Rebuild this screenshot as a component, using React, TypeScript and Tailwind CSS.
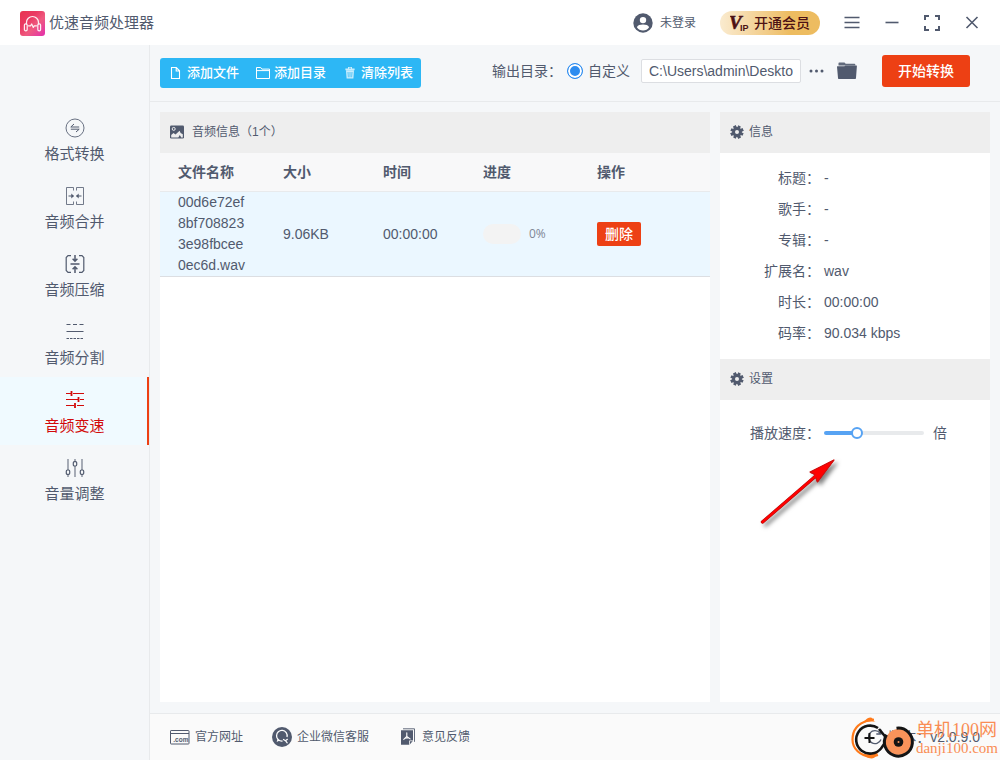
import { useState, type ReactNode } from "react";

function LogoIcon() {
  return (
    <svg viewBox="0 0 25 25" className="size-[25px] shrink-0" fill="none" aria-hidden="true">
      <defs>
        <linearGradient id="logo" x1="0" y1="0" x2="1" y2="1">
          <stop offset="0" stopColor="#e8334f" />
          <stop offset=".35" stopColor="#ea3a63" />
          <stop offset=".6" stopColor="#ef5a80" />
          <stop offset="1" stopColor="#e22fae" />
        </linearGradient>
      </defs>
      <rect width="25" height="25" rx="3" fill="url(#logo)" />
      <g stroke="#fff" strokeWidth="1.2" strokeLinecap="round" strokeLinejoin="round" opacity=".92">
        <path d="M6.5 13v-1.5a6 6 0 0 1 12 0V13" />
        <rect x="4.4" y="12.8" width="2.8" height="7" rx="1.3" />
        <rect x="17.8" y="12.8" width="2.8" height="7" rx="1.3" />
        <path d="M8.5 14.8h2l1.2-1.8 1.6 3.4 1-1.6h2.2" />
      </g>
    </svg>
  );
}

function UserIcon() {
  return (
    <svg viewBox="0 0 20 20" className="size-5" aria-hidden="true">
      <circle cx="10" cy="10" r="9.7" fill="#515a6e" />
      <circle cx="10" cy="7.1" r="3.2" fill="#fff" />
      <path d="M3.9 14.2c.5-2 3.4-2.7 6.1-2.7s5.600.7 6.100 2.700A7.400 7.400 0 0 1 10 17.400a7.400 7.400 0 0 1-6.100-3.200z" fill="#fff" />
    </svg>
  );
}

function StrokeIcon({ d, className = "size-4", width = 1.6 }: { d: string; className?: string; width?: number }) {
  return (
    <svg viewBox="0 0 16 16" className={className} fill="none" stroke="currentColor" strokeWidth={width} aria-hidden="true">
      <path d={d} />
    </svg>
  );
}

function ConvertIcon() {
  return (
    <svg viewBox="0 0 20 20" className="size-5" fill="none" stroke="currentColor" strokeWidth="1" aria-hidden="true">
      <circle cx="10" cy="10" r="9" opacity=".85" />
      <path d="M9 6 5.800 9h8.400M5.800 11.200h8.400L11 14" />
    </svg>
  );
}

function MergeIcon() {
  return (
    <svg viewBox="0 0 20 20" className="size-5" fill="none" stroke="currentColor" strokeWidth="1" aria-hidden="true">
      <path d="M8.500 4.500v-3h-7v17h7v-3M11.500 4.500v-3h7v17h-7v-3" opacity=".8" />
      <path d="M3.500 10h5M11.500 10h5" strokeWidth="1.200" />
      <path d="m6.300 7.500 2.700 2.500-2.700 2.500zM13.700 7.500 11 10l2.700 2.500z" fill="currentColor" stroke="none" />
    </svg>
  );
}

function CompressIcon() {
  return (
    <svg viewBox="0 0 20 20" className="size-5" fill="none" stroke="currentColor" strokeWidth="1.500" aria-hidden="true">
      <path d="M6 1.700H3L1.200 3.500v13L3 18.300h3M14 1.700h3l1.800 1.800v13L17 18.300h-3" strokeWidth="1.200" />
      <path d="M5.500 10h9M10 1v6M7.600 4.800 10 7.200l2.400-2.400M10 19v-6M7.600 15.200 10 12.800l2.400 2.400" />
    </svg>
  );
}

function SplitIcon() {
  return (
    <svg viewBox="0 0 20 20" className="size-5" fill="none" stroke="currentColor" strokeWidth="1.200" aria-hidden="true">
      <path d="M1.500 2.500h4M8 2.500h4M14.500 2.500h4M1.500 9.500h17" />
      <path d="M1.500 16.500h17" strokeDasharray="2.500 1" />
    </svg>
  );
}

function SpeedIcon() {
  return (
    <svg viewBox="0 0 20 20" className="size-5" fill="none" stroke="currentColor" strokeWidth="1.100" aria-hidden="true">
      <path d="M1 3.500h5M8 3.500h11M1 9.500h12M15 9.500h4M1 15.500h8M12 15.500h7" />
      <path d="M6.500 1v5M13.500 7v5M10 13v5" strokeWidth="1.800" />
    </svg>
  );
}

function VolumeIcon() {
  return (
    <svg viewBox="0 0 20 20" className="size-5" fill="none" stroke="currentColor" strokeWidth="1.200" aria-hidden="true">
      <path d="M3 1v11M3 16.500V19M10 1v2.500M10 8v11M17 1v11M17 16.500V19" opacity=".8" />
      <rect x="1.300" y="12" width="3.400" height="4.400" rx="1.200" />
      <rect x="8.300" y="3.600" width="3.400" height="4.400" rx="1.200" />
      <rect x="15.300" y="12" width="3.400" height="4.400" rx="1.200" />
    </svg>
  );
}

function FileIcon() {
  return <StrokeIcon width={1.1} d="M3.500 2.500h4.800l3.200 3.300v7.700h-8zM8.200 2.500V6h3.300" />;
}

function FolderOutlineIcon() {
  return <StrokeIcon width={1} d="M1.500 13.500v-11h4.200l1.100 1.600h7.700v9.400zM1.500 5.600h13" />;
}

function TrashIcon() {
  return (
    <svg viewBox="0 0 16 16" className="size-4" fill="currentColor" opacity=".75" aria-hidden="true">
      <path fillRule="evenodd" d="M6 2h4v1.600h2.600v1.600H3.400V3.600H6zm1 .8v.8h2v-.8z" />
      <path fillRule="evenodd" d="M4 5.200h8l-.6 8.300H4.600zm1.600 1.900.3 5.200h.7l-.2-5.200zm2 0v5.200h.8V7.100zm2 0-.2 5.200h.7l.3-5.200z" />
    </svg>
  );
}

function FolderIcon() {
  return (
    <svg viewBox="0 0 20 18" className="h-[18px] w-5" fill="#515a6e" aria-hidden="true">
      <path d="M1.500 1.200c0-.5.300-.7.700-.7h5.300l1.200 1.300h8.800c.5 0 .8.300.8.800v1H1.500z" opacity=".9" />
      <path d="M.4 4.200h7l1-.8h11.100c.3 0 .5.200.4.500l-.9 12c0 .7-.5 1-1 1H2c-.6 0-1-.3-1-1L0 4.700c0-.3.100-.5.400-.5z" />
    </svg>
  );
}

function PictureIcon() {
  return (
    <svg viewBox="0 0 14 14" className="size-[14px]" aria-hidden="true">
      <rect y=".5" width="14" height="13" rx="1.300" fill="#515a6e" />
      <circle cx="3.700" cy="3.900" r="1.500" fill="none" stroke="#eee" strokeWidth="1" />
      <path d="M1.200 12.500V10l2.300-2 2 1.500L9.600 5.800l1 2.200 2.200 1.200v3.300h-1.500L9.800 10l-1.500 2.500z" fill="#eee" />
    </svg>
  );
}

function GearIcon() {
  return (
    <svg viewBox="0 0 14 14" className="size-[14px]" aria-hidden="true">
      <g fill="#515a6e">
        <circle cx="7" cy="7" r="4.900" />
        <path d="M5.600.4h2.800v13.200H5.600zM.4 5.600h13.200v2.800H.4z" transform="rotate(22.500 7 7)" />
        <path d="M5.600.4h2.800v13.200H5.600zM.4 5.600h13.200v2.800H.4z" transform="rotate(67.500 7 7)" />
        <path d="M5.600.4h2.800v13.200H5.600zM.4 5.600h13.200v2.800H.4z" transform="rotate(-22.500 7 7)" />
      </g>
      <circle cx="7" cy="7" r="2" fill="#eee" />
    </svg>
  );
}

function SiteIcon() {
  return (
    <svg viewBox="0 0 20 16" className="h-4 w-5" fill="none" stroke="#515a6e" aria-hidden="true">
      <rect x=".5" y="1.500" width="18.500" height="13.500" rx=".6" />
      <path d="M.5 4.500H19" />
      <text x="3.300" y="13" fontSize="6.500" fontWeight="700" fontFamily="Liberation Sans, sans-serif" fill="#515a6e" stroke="none">.com</text>
    </svg>
  );
}

function SupportIcon() {
  return (
    <svg viewBox="0 0 20 20" className="size-5" fill="none" aria-hidden="true">
      <circle cx="10" cy="10" r="10" fill="#515a6e" />
      <path d="M15 10A5.300 5.300 0 1 0 10.500 14" stroke="#fff" strokeWidth="1.300" />
      <path d="m5.500 12-.8 3 3-1.400" fill="#fff" />
      <path d="m11.500 12.500 2 1.200 1.900-1.400M13.500 13.700l1.700 2.200" stroke="#fff" strokeWidth="1.200" strokeLinecap="round" />
    </svg>
  );
}

function FeedbackIcon() {
  return (
    <svg viewBox="0 0 16 18" className="h-[18px] w-4" fill="none" aria-hidden="true">
      <path d="M3 .8h11.500v13" stroke="#515a6e" strokeWidth=".9" />
      <path d="M1 2.300h12v10.500l-3.500 4H1z" fill="#515a6e" />
      <path d="M9.500 16.800v-4H13" stroke="#fafafa" strokeWidth=".8" />
      <path d="M6.800 4.800v3.600M6.800 8.400 3.800 11.300M6.800 8.400l3.300 2.500M5.200 10.100l3.400-.3" stroke="#fff" strokeWidth="1.100" strokeLinecap="round" />
    </svg>
  );
}

function RefreshIcon() {
  return (
    <svg viewBox="0 0 18 18" className="size-[18px]" fill="none" stroke="#515a6e" strokeWidth="1.300" aria-hidden="true">
      <path d="M15 11.500A6.500 6.500 0 1 1 14 5M14.800 1.500V6h-4.500" />
    </svg>
  );
}

function Watermark() {
  return (
    <div className="pointer-events-none absolute right-[2px] bottom-0 flex items-center gap-px">
      <svg viewBox="0 0 64 44" className="h-11 w-16" fill="none" aria-hidden="true">
        <path d="M23 3.500 17 4.500C7 7.500 1.500 14 1.500 23.500 1.500 33 9 39.500 20 41l7-2" stroke="#ff7a1a" strokeWidth="2.200" />
        <path d="M10 7C14 6 15 1.500 19.500 1.500c3 0 2 3.500 5 4.500-5-1-9-.5-14 2zM8 36.500c4 2.500 12 2 20-.5-3 2-3 6.500-7.500 6.500-4 0-6-3-12.500-6z" fill="#ff7a1a" />
        <path d="M27 12A14 14 0 1 0 30 32.500L38 21M28 13l9 11" stroke="#141414" strokeWidth="2.600" />
        <path d="M18.500 17v10M13.500 22h10" stroke="#141414" strokeWidth="2" />
        <circle cx="47.500" cy="26" r="13" fill="#f9935a" />
        <path d="M45.500 12.200a14 14 0 1 1-10 6.500" stroke="#141414" strokeWidth="3" />
        <circle cx="47.500" cy="26" r="4.800" fill="#141414" />
        <circle cx="47.500" cy="26" r="1" fill="#f9935a" />
      </svg>
      <div className="font-['Liberation_Serif','Noto_Sans_CJK_SC',serif] text-[#f98d54]">
        <div className="text-[18px] leading-5">单机100网</div>
        <div className="text-[15px] leading-4">danji100.com</div>
      </div>
    </div>
  );
}

const tabs: { name: string; icon: ReactNode }[] = [
  { name: "格式转换", icon: <ConvertIcon /> },
  { name: "音频合并", icon: <MergeIcon /> },
  { name: "音频压缩", icon: <CompressIcon /> },
  { name: "音频分割", icon: <SplitIcon /> },
  { name: "音频变速", icon: <SpeedIcon /> },
  { name: "音量调整", icon: <VolumeIcon /> },
];

const details = [
  ["标题", "-"],
  ["歌手", "-"],
  ["专辑", "-"],
  ["扩展名", "wav"],
  ["时长", "00:00:00"],
  ["码率", "90.034 kbps"],
];

function PanelHeader({ icon, title, gap = "gap-[5px]" }: { icon: ReactNode; title: string; gap?: string }) {
  return (
    <h2 className={`flex h-[41px] items-center bg-[#eeeeee] px-[10px] pb-[2px] text-xs ${gap}`}>
      {icon}
      {title}
    </h2>
  );
}

function ToolButton({ icon, label }: { icon: ReactNode; label: string }) {
  return (
    <button className="flex h-full items-center gap-[3px] px-2 text-[13px] font-medium">
      {icon}
      {label}
    </button>
  );
}

export default function App() {
  const [active, setActive] = useState("音频变速");
  const [speed, setSpeed] = useState(31);
  const [path, setPath] = useState("C:\\Users\\admin\\Deskto");

  return (
    <div className="relative flex min-h-screen flex-col bg-[#f5f7f9] font-['Liberation_Sans','Noto_Sans_CJK_SC',sans-serif] text-sm text-[#515a6e]">
      <header className="flex h-[45px] items-center gap-6 bg-white px-5">
        <div className="mr-auto flex items-center gap-1 pt-[2px]">
          <LogoIcon />
          <h1 className="pb-[2px] text-[15px]">优速音频处理器</h1>
        </div>
        <button className="flex items-center gap-[7px] text-xs">
          <UserIcon />
          未登录
        </button>
        <button className="flex h-6 w-[100px] items-center justify-center gap-1 rounded-full bg-linear-to-r from-[#faebcf] to-[#edbc60] to-70% text-[#4d1114]">
          <svg viewBox="0 0 20 18" className="h-[18px] w-5" fill="#4d1114" aria-hidden="true">
            <text x="-1" y="15" fontSize="19" fontWeight="700" fontStyle="italic" fontFamily="Liberation Serif, serif" stroke="#4d1114" strokeWidth=".6">V</text>
            <text x="10" y="17" fontSize="9" fontWeight="700" fontFamily="Liberation Sans, sans-serif">IP</text>
          </svg>
          <span className="text-sm leading-5 font-medium">开通会员</span>
        </button>
        <button aria-label="菜单"><StrokeIcon d="M.5 2.500h15M.5 7.500h15M.5 12.500h15" width={1.6} /></button>
        <button aria-label="最小化"><StrokeIcon d="M1.500 7.500h13" /></button>
        <button aria-label="全屏"><StrokeIcon d="M1 5V1h4M11 1h4v4M15 11v4h-4M5 15H1v-4" width={2} /></button>
        <button aria-label="关闭"><StrokeIcon d="m2.500 2 11 11M13.500 2l-11 11" /></button>
      </header>

      <div className="flex grow">
        <nav className="w-[150px] shrink-0 border-r border-[#e8eaec] pt-[60px]">
          {tabs.map((tab) => (
            <button
              key={tab.name}
              onClick={() => setActive(tab.name)}
              className={`flex w-full flex-col items-center gap-[6px] border-r-2 pt-[13px] pb-[9px] pl-[2px] text-[15px] leading-5 ${
                tab.name === active ? "border-[#ed4014] bg-[#f0faff] text-[#d20a0a]" : "border-transparent"
              }`}
            >
              {tab.icon}
              {tab.name}
            </button>
          ))}
        </nav>

        <main className="flex min-w-0 grow flex-col">
          <div className="flex h-[57px] items-center justify-between border-b border-[#e8eaec] pr-[30px] pl-[10px]">
            <div className="flex h-[30px] rounded-[3px] bg-[#2db7f5] text-white">
              <ToolButton icon={<FileIcon />} label="添加文件" />
              <ToolButton icon={<FolderOutlineIcon />} label="添加目录" />
              <ToolButton icon={<TrashIcon />} label="清除列表" />
            </div>
            <div className="flex items-center pb-1">
              <span>输出目录：</span>
              <label className="ml-[5px] flex items-center gap-[5px]">
                <input
                  type="radio"
                  name="output"
                  defaultChecked
                  className="size-4 appearance-none rounded-full border border-[#2d8cf0] bg-[#2d8cf0] shadow-[inset_0_0_0_2px_#ffffff]"
                />
                自定义
              </label>
              <input
                aria-label="输出目录"
                value={path}
                onChange={(e) => setPath(e.target.value)}
                className="ml-[11px] h-6 w-40 rounded-[2px] border border-[#dcdee2] bg-white px-[7px]"
              />
              <button aria-label="浏览" className="ml-2">
                <svg viewBox="0 0 16 16" className="size-4" fill="currentColor" aria-hidden="true">
                  <circle cx="2" cy="8" r="1.500" />
                  <circle cx="7.500" cy="8" r="1.500" />
                  <circle cx="13" cy="8" r="1.500" />
                </svg>
              </button>
              <button aria-label="打开目录" className="ml-3"><FolderIcon /></button>
              <button className="ml-[25px] h-8 w-[88px] rounded-[3px] bg-[#ed4014] text-sm font-medium text-white">开始转换</button>
            </div>
          </div>

          <div className="flex grow gap-[10px] px-[10px] pt-[10px] pb-[11px]">
            <section className="min-w-0 grow bg-white">
              <PanelHeader icon={<PictureIcon />} title="音频信息（1个）" gap="gap-2" />
              <table className="w-full table-fixed border-collapse text-left">
                <thead>
                  <tr className="h-[38px] border-b border-[#e8eaec] bg-[#f8f8f9]">
                    <th className="w-[105px] pl-[18px]">文件名称</th>
                    <th className="w-[100px] pl-[18px]">大小</th>
                    <th className="w-[100px] pl-[18px]">时间</th>
                    <th className="w-[114px] pl-[18px]">进度</th>
                    <th className="pl-[18px]">操作</th>
                  </tr>
                </thead>
                <tbody>
                  <tr className="border-b border-[#dcdee2] bg-[#ebf7ff]">
                    <td className="px-[18px] leading-[21px] break-all">00d6e72ef8bf7088233e98fbcee0ec6d.wav</td>
                    <td className="pl-[18px]">9.06KB</td>
                    <td className="pl-[18px]">00:00:00</td>
                    <td className="pl-[18px]">
                      <div className="flex items-center gap-2 font-['Open_Sans',sans-serif] text-xs text-[#808695]">
                        <div className="h-5 w-[38px] rounded-full bg-[#f3f3f3]" />
                        0%
                      </div>
                    </td>
                    <td className="pl-[18px]">
                      <button className="h-6 rounded-[2px] bg-[#ed4014] px-2 text-sm font-medium text-white">删除</button>
                    </td>
                  </tr>
                </tbody>
              </table>
            </section>

            <aside className="w-[270px] shrink-0 bg-white">
              <PanelHeader icon={<GearIcon />} title="信息" />
              <dl className="pt-[9px] pb-[11px]">
                {details.map(([name, value]) => (
                  <div key={name} className="flex h-[31px] items-center gap-1">
                    <dt className="w-[100px] text-right">{name}：</dt>
                    <dd>{value}</dd>
                  </div>
                ))}
              </dl>
              <PanelHeader icon={<GearIcon />} title="设置" />
              <div className="relative pt-[23px]">
                <div className="flex h-5 items-center gap-1">
                  <label htmlFor="speed" className="w-[100px] text-right">播放速度：</label>
                  <input
                    id="speed"
                    type="range"
                    min={0}
                    max={100}
                    value={speed}
                    onChange={(e) => setSpeed(Number(e.target.value))}
                    style={{ backgroundImage: `linear-gradient(to right, #57a3f3 ${speed}%, #e8eaec ${speed}%)` }}
                    className="h-1 w-[100px] appearance-none rounded-full [&::-webkit-slider-thumb]:size-3 [&::-webkit-slider-thumb]:appearance-none [&::-webkit-slider-thumb]:rounded-full [&::-webkit-slider-thumb]:border-2 [&::-webkit-slider-thumb]:border-solid [&::-webkit-slider-thumb]:border-[#57a3f3] [&::-webkit-slider-thumb]:bg-white"
                  />
                  <span className="ml-[5px]">倍</span>
                </div>
                <svg viewBox="0 0 90 80" className="pointer-events-none absolute top-[52px] left-9 h-20 w-[90px] drop-shadow-[3px_3px_2px_rgba(0,0,0,0.5)]" aria-hidden="true">
                  <path d="M6.500 70 61 23" stroke="#a01010" strokeWidth="3.400" strokeLinecap="round" />
                  <path d="M78 8 54 20.500l5.500 2L61 30z" fill="#ff0000" />
                  <path d="M78 8 54 20.500l4 1.500 1.500 3.500L61.500 30z" fill="#ff0000" stroke="#c01010" strokeWidth=".8" />
                  <path d="M78 8 54 20l5 2.500 2.500 7.500z" fill="#ff0000" stroke="#d01010" strokeWidth="1.200" strokeLinejoin="round" />
                  <path d="M6.500 70 62 22" stroke="#ff0000" strokeWidth="2.400" strokeLinecap="round" />
                </svg>
              </div>
            </aside>
          </div>

          <footer className="flex h-[47px] items-center gap-[29px] border-t border-[#e8eaec] bg-[#fafafa] px-5 text-xs">
            <a href="#site" className="flex items-center gap-[5px]"><SiteIcon />官方网址</a>
            <a href="#support" className="flex items-center gap-[5px]"><SupportIcon />企业微信客服</a>
            <a href="#feedback" className="flex items-center gap-1">
              <span className="flex w-5 justify-center"><FeedbackIcon /></span>
              意见反馈
            </a>
            <button className="ml-auto flex items-center gap-1 text-sm"><RefreshIcon />版本：v2.0.9.0</button>
          </footer>
        </main>
      </div>
      <Watermark />
    </div>
  );
}
